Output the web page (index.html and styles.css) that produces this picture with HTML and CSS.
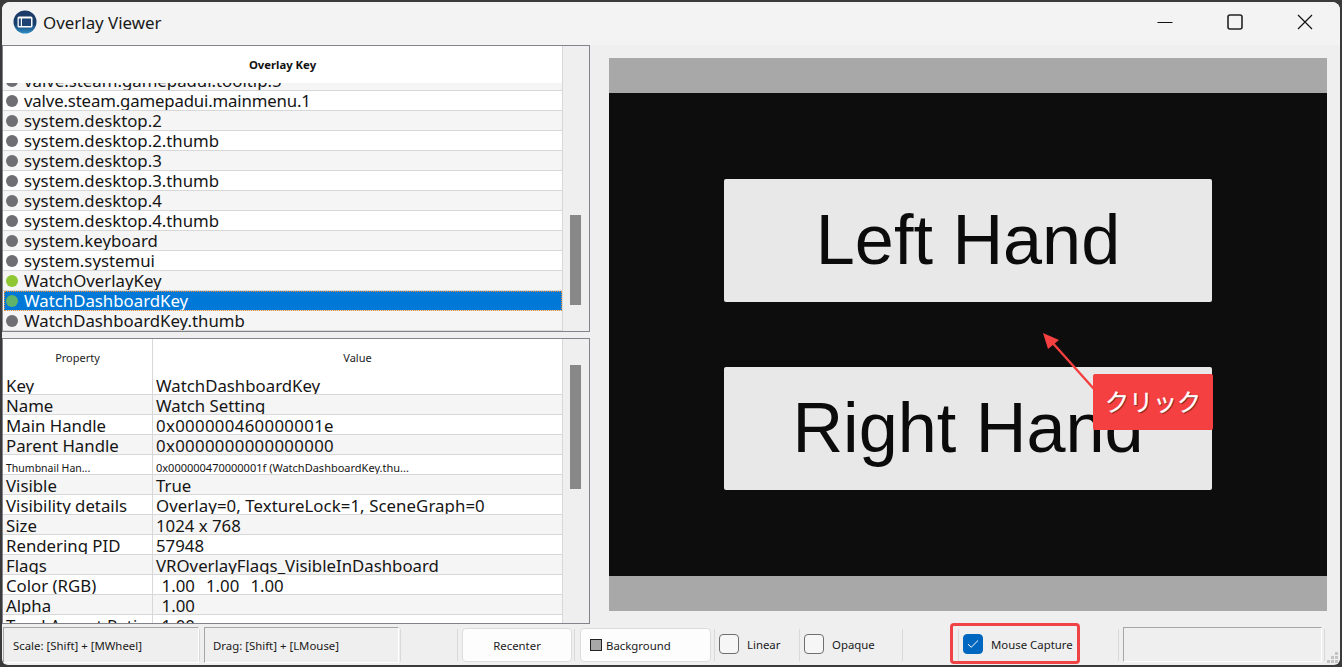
FILE: index.html
```html
<!DOCTYPE html>
<html lang="en">
<head>
<meta charset="utf-8">
<title>Overlay Viewer</title>
<link rel="stylesheet" href="styles.css">
</head>
<body>
<div class="window">
  <header class="titlebar">
    <svg class="logo" width="24" height="24" viewBox="0 0 24 24">
      <defs><linearGradient id="lg" x1="0" y1="0" x2="0" y2="1"><stop offset="0" stop-color="#1c3a66"/><stop offset="0.6" stop-color="#17406f"/><stop offset="1" stop-color="#2f8fc9"/></linearGradient></defs>
      <circle cx="12" cy="12" r="11.5" fill="url(#lg)"/>
      <rect x="4.5" y="6.5" width="15" height="11" rx="1.5" fill="#fff"/>
      <rect x="9" y="8.5" width="9" height="7.5" fill="#1d4374"/>
      <rect x="5.8" y="8.5" width="2" height="7.5" fill="#1d4374"/>
    </svg>
    <span class="title">Overlay Viewer</span>
    <div class="caption">
      <svg width="16" height="16" viewBox="0 0 16 16"><path d="M0.5 8.5H15.5" stroke="#111" stroke-width="1"/></svg>
      <svg width="16" height="16" viewBox="0 0 16 16"><rect x="1" y="1" width="14" height="14" rx="2" fill="none" stroke="#222" stroke-width="1.6"/></svg>
      <svg width="16" height="16" viewBox="0 0 16 16"><path d="M1 1L15 15M15 1L1 15" stroke="#111" stroke-width="1.2"/></svg>
    </div>
  </header>

  <main class="main">
    <div class="left">
      <section class="panel panel-keys">
        <div class="pane">
          <div class="head head-keys">Overlay Key</div>
          <div class="viewport">
            <div class="rows rows-keys">
              <div class="row key"><i class="dot"></i>valve.steam.gamepadui.tooltip.5</div>
              <div class="row key alt tight"><i class="dot"></i>valve.steam.gamepadui.mainmenu.1</div>
              <div class="row key"><i class="dot"></i>system.desktop.2</div>
              <div class="row key alt"><i class="dot"></i>system.desktop.2.thumb</div>
              <div class="row key"><i class="dot"></i>system.desktop.3</div>
              <div class="row key alt"><i class="dot"></i>system.desktop.3.thumb</div>
              <div class="row key"><i class="dot"></i>system.desktop.4</div>
              <div class="row key alt"><i class="dot"></i>system.desktop.4.thumb</div>
              <div class="row key"><i class="dot"></i>system.keyboard</div>
              <div class="row key alt"><i class="dot"></i>system.systemui</div>
              <div class="row key"><i class="dot on"></i>WatchOverlayKey</div>
              <div class="row key selected"><i class="dot on"></i>WatchDashboardKey</div>
              <div class="row key"><i class="dot"></i>WatchDashboardKey.thumb</div>
            </div>
          </div>
        </div>
        <div class="scroll scroll-keys"><div class="thumb"></div></div>
      </section>

      <section class="panel panel-props">
        <div class="pane">
          <div class="head head-props"><span class="cell-p">Property</span><span class="cell-v">Value</span></div>
          <div class="viewport">
            <div class="rows">
              <div class="row prop"><span class="cell-p">Key</span><span class="cell-v">WatchDashboardKey</span></div>
              <div class="row prop alt"><span class="cell-p">Name</span><span class="cell-v">Watch Setting</span></div>
              <div class="row prop"><span class="cell-p">Main Handle</span><span class="cell-v hex">0x000000460000001e</span></div>
              <div class="row prop alt"><span class="cell-p">Parent Handle</span><span class="cell-v hex">0x0000000000000000</span></div>
              <div class="row prop small"><span class="cell-p">Thumbnail Han...</span><span class="cell-v">0x000000470000001f (WatchDashboardKey.thu...</span></div>
              <div class="row prop alt"><span class="cell-p">Visible</span><span class="cell-v">True</span></div>
              <div class="row prop"><span class="cell-p">Visibility details</span><span class="cell-v details">Overlay=0, TextureLock=1, SceneGraph=0</span></div>
              <div class="row prop alt"><span class="cell-p">Size</span><span class="cell-v">1024 x 768</span></div>
              <div class="row prop"><span class="cell-p">Rendering PID</span><span class="cell-v">57948</span></div>
              <div class="row prop alt"><span class="cell-p">Flags</span><span class="cell-v">VROverlayFlags_VisibleInDashboard</span></div>
              <div class="row prop"><span class="cell-p">Color (RGB)</span><span class="cell-v nums">&nbsp;1.00&nbsp;&nbsp;1.00&nbsp;&nbsp;1.00</span></div>
              <div class="row prop alt"><span class="cell-p">Alpha</span><span class="cell-v nums">&nbsp;1.00</span></div>
              <div class="row prop"><span class="cell-p">Texel Aspect Ratio</span><span class="cell-v nums">&nbsp;1.00</span></div>
            </div>
          </div>
        </div>
        <div class="scroll scroll-props"><div class="thumb"></div></div>
      </section>
    </div>

    <div class="preview">
      <div class="stage">
        <div class="vr-button">Left Hand</div>
        <div class="vr-button">Right Hand</div>
      </div>
    </div>
  </main>

  <footer class="footer">
    <div class="status status-a">Scale: [Shift] + [MWheel]</div>
    <div class="sep"></div>
    <div class="status status-b">Drag: [Shift] + [LMouse]</div>
    <div class="sep sep-after-b"></div>
    <div class="sep sep-wide"></div>
    <button class="btn btn-recenter">Recenter</button>
    <div class="sep sep-after-recenter"></div>
    <button class="btn btn-bg"><i class="swatch"></i>Background</button>
    <div class="sep sep-after-bg"></div>
    <label class="check check-linear"><i class="box"></i>Linear</label>
    <div class="sep"></div>
    <label class="check check-opaque"><i class="box"></i>Opaque</label>
    <div class="sep"></div>
    <div class="sep sep-before-mouse"></div>
    <label class="check check-mouse"><i class="box checked"><svg width="12" height="10" viewBox="0 0 12 10"><path d="M1 5.2L4.2 8.3L11 1.5" fill="none" stroke="#fff" stroke-width="1"/></svg></i>Mouse Capture</label>
    <div class="sep"></div>
    <div class="status status-c"></div>
    <div class="sep sep-last"></div>
  </footer>

  <svg class="grip" width="12" height="12" viewBox="0 0 12 12"><path d="M8 0h3v3H8zM4 4h3v3H4zM8 4h3v3H8zM0 8h3v3H0zM4 8h3v3H4zM8 8h3v3H8z" fill="#c4c4c4"/></svg>

  <div class="mark-box"></div>
  <svg class="mark-arrow" width="60" height="62" viewBox="0 0 60 62">
    <path d="M52 56L8 7" stroke="#f44040" stroke-width="2.4" fill="none"/>
    <path d="M1 0L17 7L6 16Z" fill="#f44040"/>
  </svg>
  <div class="mark-label">クリック</div>
</div>
</body>
</html>
```

FILE: styles.css
```css
* { box-sizing: border-box; }
html, body { margin: 0; height: 100%; }
body {
  background: #3a3a3a;
  padding: 2px;
  overflow: hidden;
  font-family: "Noto Sans", "Noto Sans CJK JP", sans-serif;
  color: #111;
}
.window {
  position: relative;
  height: 663px;
  background: #efefef;
  border-radius: 8px 8px 6px 6px;
  display: flex;
  flex-direction: column;
  overflow: hidden;
}
.titlebar {
  height: 43px;
  flex: none;
  background: #f3f3f3;
  display: flex;
  align-items: center;
  padding-left: 11px;
  padding-bottom: 3px;
}
.logo { flex: none; }
.title { margin-left: 6px; font-size: 16.9px; color: #1a1a1a; }
.caption { margin-left: auto; display: flex; gap: 54px; padding-right: 27px; align-items: center; }
.caption svg { display: block; }

.main { flex: none; height: 579px; display: flex; }
.left { width: 588px; flex: none; display: flex; flex-direction: column; gap: 6px; }
.panel { border: 1px solid #83838b; display: flex; overflow: hidden; }
.panel-keys { height: 287px; }
.panel-props { height: 286px; }
.pane { flex: 1; min-width: 0; display: flex; flex-direction: column; background: #fff; }
.head { flex: none; background: #fff; }
.head-keys { height: 37px; font-size: 11.3px; font-weight: 700; text-align: center; line-height: 38px; color: #111; }
.head-props { height: 36px; display: flex; font-size: 11px; line-height: 38px; color: #222; }
.head-props .cell-p { text-align: center; padding-left: 0; }
.head-props .cell-v { text-align: center; padding: 0; }
.viewport { flex: 1; min-height: 0; overflow: hidden; }
.rows-keys { margin-top: -12px; }
.row {
  height: 20px;
  overflow: hidden;
  border-bottom: 1px solid #d8d8d8;
  font-size: 16.8px;
  line-height: 22px;
  white-space: nowrap;
  background: #fff;
  color: #151515;
}
.row.alt { background: #f5f5f5; }
.key { display: flex; align-items: flex-start; padding-left: 3px; background: #f5f5f5; line-height: 20px; }
.key.alt { background: #fff; }
.tight { letter-spacing: -0.16px; }
.dot { flex: none; width: 12px; height: 12px; border-radius: 50%; background: #6e6e73; margin-top: 4px; margin-right: 6px; }
.dot.on { background: #8fc733; }
.key.selected { background: #0078d7; color: #fff; outline: 1px dotted #e8913a; outline-offset: -1px; margin-left: 1px; padding-left: 2px; }
.key.selected .dot.on { background: #5fb36a; }
.prop { display: flex; }
.cell-p { width: 150px; flex: none; padding-left: 3px; border-right: 1px solid #d8d8d8; }
.cell-v { flex: 1; padding-left: 3px; }
.hex { letter-spacing: 0.33px; }
.details { letter-spacing: 0.08px; }
.nums { word-spacing: 1.2px; }
.small .cell-p { font-size: 10.5px; line-height: 26px; }
.small .cell-v { font-size: 11px; line-height: 26px; }
.scroll { width: 27px; flex: none; background: #efefef; border-left: 1px solid #d8d8d8; position: relative; }
.scroll .thumb { position: absolute; left: 7px; width: 11px; background: #888; }
.scroll-keys .thumb { top: 169px; height: 90px; }
.scroll-props .thumb { top: 26px; height: 124px; }

.preview { flex: 1; min-width: 0; padding: 13px 13px 0 19px; }
.stage {
  height: 553px;
  background: #0d0d0d;
  border-top: 35px solid #a8a8a8;
  border-bottom: 35px solid #a8a8a8;
  padding: 86px 115px 0;
  display: flex;
  flex-direction: column;
  gap: 65px;
}
.vr-button {
  height: 123px;
  background: #e8e8e8;
  border-radius: 2px;
  font-family: "Liberation Sans", sans-serif;
  font-size: 70.2px;
  line-height: 122px;
  text-align: center;
  color: #0b0b0b;
}

.footer { flex: 1; min-height: 0; display: flex; align-items: flex-start; font-size: 11.4px; color: #1a1a1a; }
.status {
  height: 36px;
  border: 1px solid #a6a6a6;
  border-right-color: #fff;
  border-bottom-color: #fff;
  line-height: 36px;
  padding-left: 9px;
  margin-top: 3px;
  flex: none;
}
.status-a { width: 196px; margin-left: 1px; }
.status-b { width: 195px; margin-left: 4px; padding-left: 8px; }
.status-c { width: 199px; height: 35px; margin-left: 4px; padding: 0; }
.sep { width: 1px; height: 32px; margin-top: 5px; background: #d9d9d9; flex: none; }
.sep-after-b { margin-left: 1px; }
.sep-wide { margin-left: 56px; }
.sep-after-recenter { margin-left: 2px; }
.sep-after-bg { margin-left: 3px; }
.sep-before-mouse { margin-left: 55px; }
.sep-last { margin-left: 2px; }
.btn {
  font: inherit;
  color: inherit;
  height: 34px;
  margin-top: 4px;
  flex: none;
  background: #fdfdfd;
  border: 1px solid #dcdcdc;
  border-radius: 4px;
}
.btn-recenter { width: 110px; margin-left: 4px; }
.btn-bg { width: 131px; margin-left: 5px; display: flex; align-items: center; padding: 0 0 0 9px; }
.swatch { width: 12px; height: 12px; background: #a8a8a8; border: 1px solid #222; margin-right: 4px; flex: none; }
.check { display: flex; align-items: center; height: 20px; margin-top: 10px; margin-left: 4px; flex: none; white-space: nowrap; }
.box { width: 20px; height: 20px; border: 1px solid #6f6f6f; border-radius: 4px; flex: none; background: #f6f6f6; display: flex; align-items: center; justify-content: center; margin-right: 8px; }
.box.checked { background: #0067c0; border-color: #0067c0; }
.check-linear { width: 80px; }
.check-opaque { width: 98px; }
.check-mouse { width: 155px; }

.grip { position: absolute; right: 1px; bottom: 1px; }
.mark-box { position: absolute; left: 948px; top: 621px; width: 130px; height: 41px; border: 3px solid #f04346; border-radius: 4px; }
.mark-arrow { position: absolute; left: 1040px; top: 331px; }
.mark-label {
  position: absolute;
  left: 1091px;
  top: 372px;
  width: 120px;
  height: 56px;
  background: #f44040;
  border-radius: 2px;
  color: #fff;
  font-size: 24px;
  font-family: "Noto Sans CJK JP", sans-serif;
  font-weight: 400;
  -webkit-text-stroke: 0.3px #fff;
  line-height: 54px;
  text-align: center;
  text-shadow: 1px 1px 1px #6b2020;
}
```
